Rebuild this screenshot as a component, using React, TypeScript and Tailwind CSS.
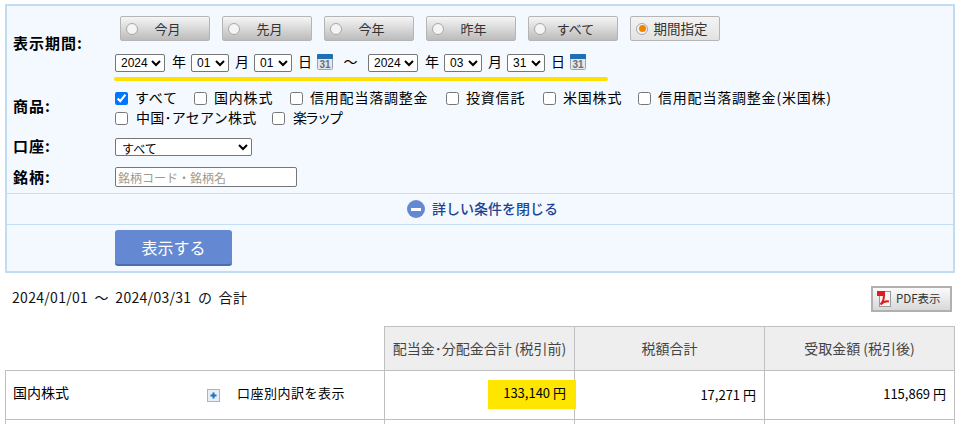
const font = "font-['Noto_Sans_CJK_JP','Liberation_Sans',sans-serif]";

function Radio({ on }: { on?: boolean }) {
  return (
    <span className="w-[12px] h-[12px] rounded-full border border-[#a8a8a8] bg-[#f4f4f4] flex items-center justify-center shrink-0">
      {on && <span className="w-[7px] h-[7px] rounded-full bg-[#f08300]" />}
    </span>
  );
}

function PeriodButton({ label, on }: { label: string; on?: boolean }) {
  return (
    <div
      className={
        "w-[90px] h-[25px] rounded-[2px] border border-[#b5b5b5] flex items-center pl-[5px] text-[#333] " +
        (on
          ? "text-[13.5px] bg-gradient-to-b from-[#f4f4f4] to-[#e2e2e2]"
          : "text-[13px] bg-gradient-to-b from-[#f6f6f6] to-[#bcbcbc]")
      }
    >
      <Radio on={on} />
      <span className={"flex-1 text-center " + (on ? "pr-[6px]" : "pr-[12px]")}>{label}</span>
    </div>
  );
}

function Calendar() {
  return (
    <svg width="16" height="16" viewBox="0 0 16 16" className="shrink-0 -mt-[3px]">
      <rect x="0.5" y="0.5" width="15" height="15" rx="1" fill="#e2e8ec" stroke="#9aa4ae" />
      <rect x="0" y="0" width="16" height="5" rx="1" fill="#1f6fb5" />
      <text x="8" y="13.5" textAnchor="middle" fontSize="10" fontWeight="700" fill="#6a7078" fontFamily="Liberation Sans">31</text>
    </svg>
  );
}

function Sel({ value, w }: { value: string; w: string }) {
  return (
    <select
      defaultValue={value}
      className={w + " h-[18px] pl-[1px] bg-white border border-[#767676] rounded-[2px] text-[12px] leading-none text-black font-['Liberation_Sans',sans-serif]"}
    >
      <option>{value}</option>
    </select>
  );
}

function DateParts({ y, m, d }: { y: string; m: string; d: string }) {
  return (
    <div className="flex items-center">
      <Sel value={y} w="w-[50px]" />
      <span className="ml-[7px] w-[19px] text-[14px] -mt-[3px]">年</span>
      <Sel value={m} w="w-[38px]" />
      <span className="ml-[6px] w-[19px] text-[14px] -mt-[3px]">月</span>
      <Sel value={d} w="w-[38px]" />
      <span className="ml-[6px] w-[19px] text-[14px] -mt-[3px]">日</span>
      <Calendar />
    </div>
  );
}

function Check({ label, on, w, track = "tracking-[0.8px]" }: { label: string; on?: boolean; w: string; track?: string }) {
  return (
    <label className={"flex items-center " + w}>
      <input type="checkbox" defaultChecked={on} className="w-[13px] h-[13px] m-0 shrink-0" />
      <span className={"ml-[7px] text-[14px] leading-[20px] -mt-[2px] whitespace-nowrap " + track}>{label}</span>
    </label>
  );
}

function Label({ text }: { text: string }) {
  return <div className="w-[108px] pl-[6px] font-bold text-[15px] tracking-[1px] text-black shrink-0">{text}</div>;
}

function PdfIcon() {
  return (
    <svg width="15" height="16" viewBox="0 0 15 16" className="shrink-0">
      <rect x="2.5" y="0.5" width="11" height="15" fill="#f6f6f6" stroke="#9a9a9a" />
      <rect x="0" y="0" width="8" height="5" fill="#e11b1b" />
      <path d="M7 4 C7 8 6 11 3.5 13.5 C6 11 9 10 12 10.5" fill="none" stroke="#e11b1b" strokeWidth="2" />
    </svg>
  );
}

function PlusIcon() {
  return (
    <span className="w-[13px] h-[13px] border border-[#a9b4bf] bg-[#e8eef5] flex items-center justify-center">
      <svg width="7" height="7" viewBox="0 0 7 7">
        <path d="M3.5 0.5v6M0.5 3.5h6" stroke="#1a6fc9" strokeWidth="2" />
      </svg>
    </span>
  );
}

export default function App() {
  return (
    <div className={font + " w-[961px] h-[424px] overflow-hidden bg-white pt-[4px] text-black"}>
      <div className="ml-[5px] w-[950px] h-[269px] border-2 border-[#bfdcf3] bg-[#f3f9fe]">
        {/* 表示期間 */}
        <div className="flex pt-[10px]">
          <div className="pt-[16px]"><Label text="表示期間:" /></div>
          <div className="-ml-[1px]">
            <div className="flex gap-[12px] pl-[6px]">
              <PeriodButton label="今月" />
              <PeriodButton label="先月" />
              <PeriodButton label="今年" />
              <PeriodButton label="昨年" />
              <PeriodButton label="すべて" />
              <PeriodButton label="期間指定" on />
            </div>
            <div className="flex items-center mt-[13px] ml-[1px] h-[18px]">
              <DateParts y="2024" m="01" d="01" />
              <span className="w-[35px] text-center text-[14px] -mt-[3px]">～</span>
              <DateParts y="2024" m="03" d="31" />
            </div>
            <div className="mt-[5px] w-[494px] h-[4px] rounded-full bg-[#ffe100]" />
          </div>
        </div>

        {/* 商品 */}
        <div className="flex mt-[7px]">
          <div className="pt-[7px]"><Label text="商品:" /></div>
          <div className="leading-none">
            <div className="flex h-[20px]">
              <Check label="すべて" on w="w-[79px]" />
              <Check label="国内株式" w="w-[96px]" />
              <Check label="信用配当落調整金" w="w-[156px]" />
              <Check label="投資信託" w="w-[97px]" />
              <Check label="米国株式" w="w-[95px]" />
              <Check label="信用配当落調整金(米国株)" w="w-[200px]" />
            </div>
            <div className="flex h-[20px]">
              <Check label="中国･アセアン株式" w="w-[157px]" track="tracking-[0.25px] pl-[1px]" />
              <Check label="楽ラップ" w="w-[80px]" track="tracking-[-2px] pl-[1px]" />
            </div>
          </div>
        </div>

        {/* 口座 */}
        <div className="flex items-center mt-[10px] h-[18px]">
          <div className="-mt-[2px]"><Label text="口座:" /></div>
          <select
            defaultValue="すべて"
            className="w-[137px] h-[18px] bg-white border border-[#767676] rounded-[2px] text-[12px] leading-none pl-[2px]"
          >
            <option>すべて</option>
          </select>
        </div>

        {/* 銘柄 */}
        <div className="flex items-center mt-[11px] h-[20px]">
          <Label text="銘柄:" />
          <input
            placeholder="銘柄コード・銘柄名"
            className="w-[182px] h-[20px] bg-white border border-[#767676] rounded-[2px] text-[12px] px-[2px] placeholder:text-[#a09a90]"
          />
        </div>

        {/* 詳しい条件 */}
        <div className="mt-[6px] h-[32px] pl-[5px] border-y border-[#c4def2] flex items-center justify-center gap-[7px]">
          <span className="w-[18px] h-[18px] rounded-full bg-[#6488d1] flex items-center justify-center">
            <span className="w-[10px] h-[3px] bg-white" />
          </span>
          <span className="text-[14px] font-medium text-[#1d4494] -mt-[1px]">詳しい条件を閉じる</span>
        </div>

        {/* 表示する */}
        <div className="pl-[108px] pt-[5px]">
          <div className="w-[117px] h-[36px] rounded-[3px] bg-[#6488d1] border-b-2 border-[#4a6cb0] flex items-center justify-center text-white text-[16px]">
            表示する
          </div>
        </div>
      </div>

      {/* 合計 */}
      <div className="ml-[12px] w-[940px] mt-[13px] h-[26px] flex items-center justify-between">
        <span className="text-[14px] tracking-[0.3px] [word-spacing:3px] -mt-[4px] text-[#111]">2024/01/01 ～ 2024/03/31 の 合計</span>
        <div className="w-[81px] h-[26px] border-2 border-[#b0b0b0] bg-gradient-to-b from-[#fbfbfb] to-[#d8d8d8] flex items-center pl-[4px] gap-[4px] text-[11.5px] text-[#333]">
          <PdfIcon />
          <span>PDF表示</span>
        </div>
      </div>

      {/* テーブル */}
      <div className="ml-[5px] mt-[14px] w-[950px] text-[14px]">
        <div className="flex h-[45px]">
          <div className="w-[379px] border-b border-[#c0c0c0]" />
          <div className="w-[190px] border border-r-0 border-[#c0c0c0] bg-[#eeeeee] flex items-center justify-center text-[#444] whitespace-nowrap">配当金･分配金合計 (税引前)</div>
          <div className="w-[190px] border border-r-0 border-[#c0c0c0] bg-[#eeeeee] flex items-center justify-center text-[#444]">税額合計</div>
          <div className="w-[191px] border border-[#c0c0c0] bg-[#eeeeee] flex items-center justify-center text-[#444]">受取金額 (税引後)</div>
        </div>
        <div className="flex h-[49px] border-b border-[#c0c0c0] text-[13px]">
          <div className="w-[379px] border-l border-[#c0c0c0] flex items-center pl-[7px]">
            <span className="w-[194px] -mt-[5px] text-[14px]">国内株式</span>
            <PlusIcon />
            <span className="ml-[17px] -mt-[4px] tracking-[0.5px]">口座別内訳を表示</span>
          </div>
          <div className="w-[190px] border-l border-[#c0c0c0] flex items-center justify-end">
            <span className="w-[88px] h-[29px] -mr-[2px] -mt-[1px] pr-[10px] pb-[3px] bg-[#ffe600] flex items-center justify-end z-10 text-black">133,140 円</span>
          </div>
          <div className="w-[190px] border-l border-[#c0c0c0] flex items-center justify-end pr-[8px]">17,271 円</div>
          <div className="w-[191px] border-x border-[#c0c0c0] flex items-center justify-end pr-[8px] -mt-[3px]">115,869 円</div>
        </div>
        <div className="flex h-[10px]">
          <div className="w-[379px] border-l border-[#c0c0c0]" />
          <div className="w-[190px] border-l border-[#c0c0c0]" />
          <div className="w-[190px] border-l border-[#c0c0c0]" />
          <div className="w-[191px] border-x border-[#c0c0c0]" />
        </div>
      </div>
    </div>
  );
}
